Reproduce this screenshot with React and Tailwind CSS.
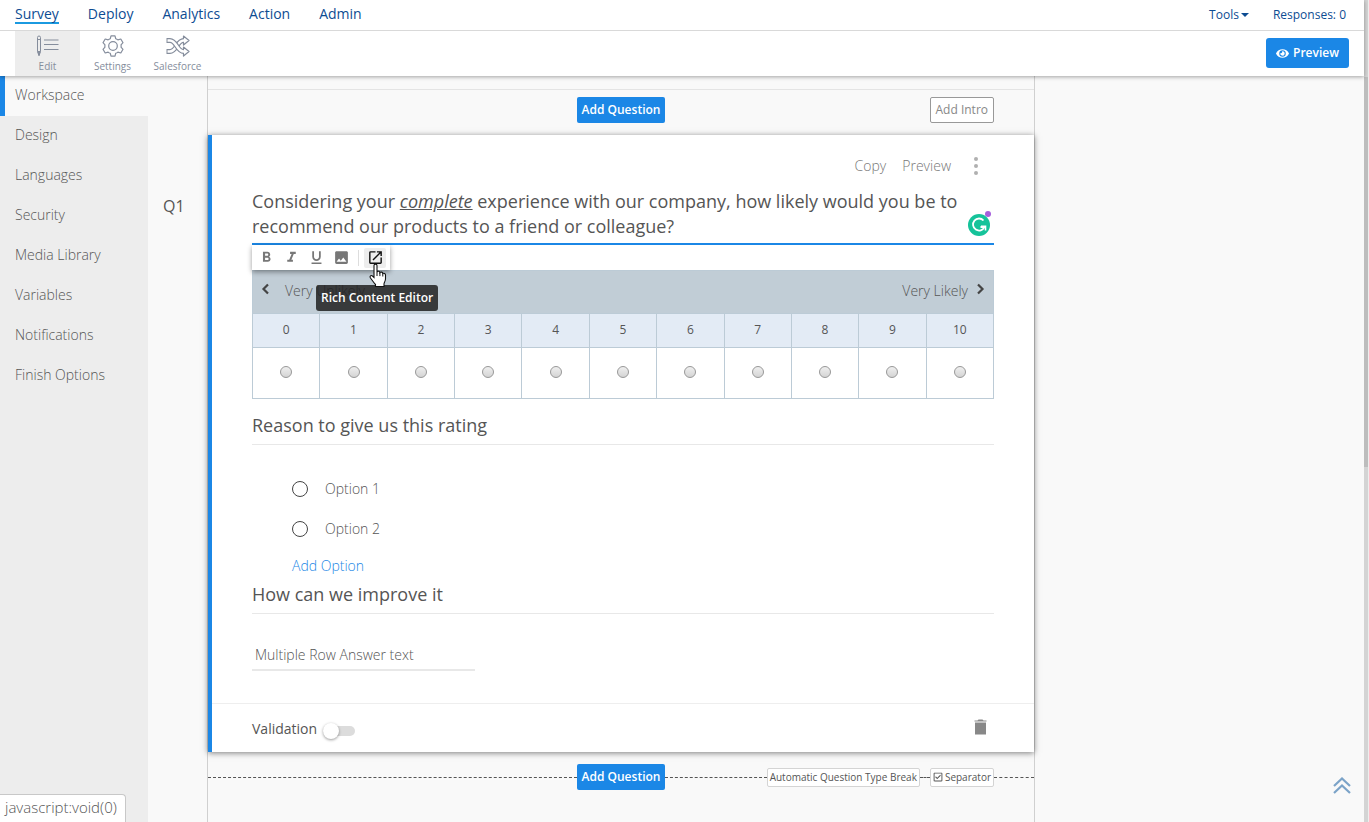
import { useState } from 'react';
import { FaEye, FaRegCheckSquare } from 'react-icons/fa';
import {
  MdFormatBold,
  MdFormatItalic,
  MdFormatUnderlined,
  MdImage,
  MdOpenInNew,
} from 'react-icons/md';

const navItems = ['Survey', 'Deploy', 'Analytics', 'Action', 'Admin'];

const sidebarItems = [
  'Workspace',
  'Design',
  'Languages',
  'Security',
  'Media Library',
  'Variables',
  'Notifications',
  'Finish Options',
];

const ratings = [0, 1, 2, 3, 4, 5, 6, 7, 8, 9, 10];

const EditIcon = () => (
  <svg width="24" height="22" viewBox="0 0 24 22" fill="none" stroke="#858d9c" strokeWidth="1">
    <path d="M1.5 2.5 a1 1 0 0 1 3 0 V16.5 L3 20.5 L1.5 16.5 Z M1.5 4.5 h3 M1.5 16.5 h3" />
    <path d="M2 17 L3 20.5 L4 17 Z" fill="#858d9c" />
    <path d="M8 5 h14.5 M8 9.5 h14.5 M8 14.5 h14.5" strokeWidth="1.2" />
  </svg>
);

const GearIcon = () => (
  <svg width="22" height="22" viewBox="0 0 22 22" fill="none" stroke="#858d9c" strokeWidth="1.2" strokeLinejoin="round">
    <path d="M9 .8 h4 l.7 2.9 q1.3 .4 2.2 1.2 l2.9 -.9 l2.2 3.7 l-2 2.1 q.4 1.2 0 2.4 l2 2.1 l-2.2 3.7 l-2.9 -.9 q-.9 .8 -2.2 1.2 l-.7 2.9 h-4 l-.7 -2.9 q-1.3 -.4 -2.2 -1.2 l-2.9 .9 l-2.2 -3.7 l2 -2.1 q-.4 -1.2 0 -2.4 l-2 -2.1 l2.2 -3.7 l2.9 .9 q.9 -.8 2.2 -1.2 Z" />
    <circle cx="11" cy="11" r="4.3" />
  </svg>
);

const ShuffleIcon = () => (
  <svg width="24" height="22" viewBox="0 0 24 22" fill="none">
    <path d="M0.5 16.5 H4 C10.5 16.5 11 5.5 17.5 5.5 H18" stroke="#858d9c" strokeWidth="5" />
    <path d="M1.5 16.5 H4 C10.5 16.5 11 5.5 17.5 5.5 H19" stroke="#fff" strokeWidth="2.6" />
    <path d="M0.5 5.5 H4 C10.5 5.5 11 16.5 17.5 16.5 H18" stroke="#858d9c" strokeWidth="5" />
    <path d="M1.5 5.5 H4 C10.5 5.5 11 16.5 17.5 16.5 H19" stroke="#fff" strokeWidth="2.6" />
    <path d="M17.5 3.5 V1 L23 5.5 L17.5 10 V7.5 M17.5 14.5 V12 L23 16.5 L17.5 21 V18.5" stroke="#858d9c" strokeWidth="1.2" strokeLinejoin="round" />
  </svg>
);

const GrammarIcon = () => (
  <svg width="27" height="28" viewBox="0 0 27 28" fill="none" aria-hidden="true">
    <circle cx="12" cy="16" r="11" fill="#15c39a" />
    <path d="M16.5 11.5 A6 6 0 1 0 17.5 18 H13.5" stroke="#fff" strokeWidth="1.8" />
    <path d="M14 17.3 H18.5 V21.5" stroke="#fff" strokeWidth="1.6" />
    <circle cx="21" cy="5" r="3" fill="#a65fdc" />
  </svg>
);

const HandCursor = () => (
  <svg width="18" height="25" viewBox="0 0 18 25" aria-hidden="true">
    <path
      d="M5 2.5 C5 .6 8 .6 8 2.5 V9 C8.5 7.8 10.7 8 10.9 9.6 C11.5 8.7 13.5 8.9 13.8 10.5 C14.8 9.8 16.5 10.4 16.5 12 V16 C16.5 18 15 19.5 15 21 V23.5 H6.5 V21.5 C4.5 19.5 3.5 17.5 1.5 15 C.3 13.3 2 11.7 3.5 13 L5 14.5 Z"
      fill="#fff"
      stroke="#111"
      strokeWidth="1.1"
    />
    <path d="M8 9 v4 M10.9 9.6 v3.5 M13.8 10.5 v3" stroke="#111" />
  </svg>
);

const tabs = [
  { label: 'Edit', Icon: EditIcon, active: true },
  { label: 'Settings', Icon: GearIcon },
  { label: 'Salesforce', Icon: ShuffleIcon },
];

function Header() {
  return (
    <header className="relative z-10 bg-white shadow-[0_1px_4px_rgba(0,0,0,0.35)]">
      <div className="flex h-[31px] items-center justify-between border-b border-[#d9d9d9] pl-[15px] pr-[18px] text-[#0d4c92]">
        <nav className="flex gap-[29px] text-sm leading-4">
          {navItems.map((item) => (
            <a
              key={item}
              href="#"
              className={item === 'Survey' ? 'border-b-2 border-[#1b9ae0]' : 'border-b-2 border-transparent'}
            >
              {item}
            </a>
          ))}
        </nav>
        <div className="flex gap-6 text-xs">
          <button type="button" className="flex items-center gap-[2px]">
            Tools
            <svg width="8" height="4" viewBox="0 0 8 4" fill="currentColor"><path d="M0 0 H8 L4 4 Z" /></svg>
          </button>
          <span>Responses: 0</span>
        </div>
      </div>
      <div className="flex items-center justify-between px-[15px]">
        <div className="flex">
          {tabs.map(({ label, Icon, active }) => (
            <button
              key={label}
              type="button"
              className={`flex h-[45px] w-[65px] flex-col items-center gap-px pt-1 text-[10px] leading-4 text-[#858d9c] ${active ? 'bg-[#ededed]' : ''}`}
            >
              <Icon />
              {label}
            </button>
          ))}
        </div>
        <button type="button" className="mb-px flex h-[30px] items-center gap-1 rounded-[3px] bg-[#1b87e6] px-[10px] text-xs font-semibold text-white">
          <FaEye size={13} /> Preview
        </button>
      </div>
    </header>
  );
}

function Sidebar() {
  return (
    <nav className="w-[148px] shrink-0 bg-[#ededed] text-sm font-light">
      {sidebarItems.map((item) => (
        <a
          key={item}
          href="#"
          className={`flex h-10 items-center border-l-[5px] pb-[2px] pl-[10px] ${item === 'Workspace' ? 'border-[#1b87e6] bg-[#f9f9f9]' : 'border-transparent'}`}
        >
          {item}
        </a>
      ))}
    </nav>
  );
}

function AddQuestion() {
  return (
    <button type="button" className="h-[26px] rounded-[2px] bg-[#1b87e6] px-[5px] text-xs font-semibold text-white">
      Add Question
    </button>
  );
}

const toolButton = 'flex h-5 w-[25px] items-center justify-center';

function Toolbar() {
  return (
    <div className="relative flex h-[25px] w-[138px] items-center bg-white pl-[2px] text-[#777] shadow-[0_2px_5px_rgba(0,0,0,0.4)]">
      <button type="button" aria-label="Bold" className={toolButton}><MdFormatBold size={17} /></button>
      <button type="button" aria-label="Italic" className={toolButton}><MdFormatItalic size={17} /></button>
      <button type="button" aria-label="Underline" className={toolButton}><MdFormatUnderlined size={17} /></button>
      <button type="button" aria-label="Image" className={toolButton}><MdImage size={17} /></button>
      <span className="ml-1 mr-[5px] h-4 w-px bg-[#ddd]" />
      <button type="button" aria-label="Rich Content Editor" className="flex h-5 w-[22px] items-center justify-center rounded-[2px] bg-[#ededed] text-[#111]">
        <MdOpenInNew size={17} />
      </button>
      <div role="tooltip" className="absolute left-16 top-10 z-10 whitespace-nowrap rounded-[3px] bg-[#202020]/85 px-[5px] text-xs font-semibold leading-[26px] text-white">
        Rich Content Editor
      </div>
      <div className="absolute left-[117px] top-[18px] z-20">
        <HandCursor />
      </div>
    </div>
  );
}

function RatingTable() {
  return (
    <table className="w-full table-fixed border-collapse border border-[#bccbd6] bg-white">
      <thead>
        <tr className="h-[43px] bg-[#c1cdd6]">
          <th colSpan={11} className="px-2 pb-[3px] text-sm font-light text-[#555]">
            <div className="flex items-center">
              <svg width="9" height="12" viewBox="0 0 9 12" fill="none" stroke="#444" strokeWidth="2.2" className="mb-1"><path d="M7 1.5 L2.5 6 L7 10.5" /></svg>
              <span className="ml-[15px]">Very Unlikely</span>
              <span className="ml-auto mr-2">Very Likely</span>
              <svg width="9" height="12" viewBox="0 0 9 12" fill="none" stroke="#444" strokeWidth="2.2" className="mb-1"><path d="M2 1.5 L6.5 6 L2 10.5" /></svg>
            </div>
          </th>
        </tr>
        <tr className="h-[34px] bg-[#e3ebf5]">
          {ratings.map((n) => (
            <th key={n} className="border border-[#bccbd6] pb-[2px] text-xs font-normal">{n}</th>
          ))}
        </tr>
      </thead>
      <tbody>
        <tr className="h-[51px]">
          {ratings.map((n) => (
            <td key={n} className="border border-[#bccbd6] pb-[2px]">
              <input
                type="radio"
                name="rating"
                value={n}
                aria-label={`Rating ${n}`}
                className="mx-auto block size-3 appearance-none rounded-full border border-[#999] bg-linear-to-b from-[#efefef] to-[#d4d4d4]"
              />
            </td>
          ))}
        </tr>
      </tbody>
    </table>
  );
}

function QuestionCard() {
  const [reason, setReason] = useState('');
  const [validation, setValidation] = useState(false);

  return (
    <section className="border-l-4 border-[#1b87e6] bg-white shadow-[0_1px_6px_rgba(0,0,0,0.5)]">
      <div className="px-10">
        <div className="flex h-[54px] items-center justify-end pr-[15px] pt-2 text-sm font-light text-[#777]">
          <button type="button">Copy</button>
          <button type="button" className="ml-4">Preview</button>
          <button type="button" aria-label="More" className="ml-[22px]">
            <svg width="6" height="18" viewBox="0 0 6 18" fill="#b0b0b0">
              <circle cx="3" cy="2" r="2" />
              <circle cx="3" cy="9" r="2" />
              <circle cx="3" cy="16" r="2" />
            </svg>
          </button>
        </div>

        <div className="flex items-end justify-between border-b-2 border-[#1b87e6]">
          <h2 className="pb-1 text-lg/[25px]">
            Considering your <em className="underline">complete</em> experience with our company, how likely would you be to
            recommend our products to a friend or colleague?
          </h2>
          <div className="-ml-4 mb-[6px] shrink-0">
            <GrammarIcon />
          </div>
        </div>
        <Toolbar />
        <RatingTable />

        <h3 className="mt-[14px] border-b border-[#e8e8e8] pb-[7px] text-lg/6">Reason to give us this rating</h3>
        <div className="pl-10 pt-6 text-sm font-light">
          {['Option 1', 'Option 2'].map((option) => (
            <label key={option} className="flex h-10 items-center gap-[17px]">
              <input
                type="radio"
                name="reason"
                checked={reason === option}
                onChange={() => setReason(option)}
                className="size-4 appearance-none rounded-full border border-[#444] checked:border-4"
              />
              {option}
            </label>
          ))}
          <button type="button" className="block h-[33px] text-[#1b87e6]">Add Option</button>
        </div>

        <h3 className="border-b border-[#e8e8e8] pb-[7px] text-lg/6">How can we improve it</h3>
        <input
          type="text"
          aria-label="Answer"
          placeholder="Multiple Row Answer text"
          className="mb-8 mt-[26px] block h-[31px] w-[223px] border-b-2 border-[#e8e8e8] px-[3px] text-sm font-light outline-none placeholder:text-[#555]"
        />
      </div>

      <div className="flex h-[49px] items-center justify-between border-t border-[#eee] px-10">
        <label className="flex items-center gap-[6px] pt-[2px] text-sm">
          Validation
          <input
            type="checkbox"
            checked={validation}
            onChange={(e) => setValidation(e.target.checked)}
            className="relative mt-1 h-[10px] w-8 appearance-none rounded-full bg-[#dcdcdc] before:absolute before:-top-[3px] before:left-0 before:size-4 before:rounded-full before:bg-white before:shadow-[0_1px_3px_rgba(0,0,0,0.4)] checked:bg-[#9cc9f3] checked:before:left-4"
          />
        </label>
        <button type="button" aria-label="Delete" className="mb-[3px] mr-[7px]">
          <svg width="13" height="16" viewBox="0 0 13 16" fill="#888">
            <path d="M.5 1.5 H3.5 L4.5 .5 H8.5 L9.5 1.5 H12.5 V2.5 H.5 Z M1 3.5 H12 V15.5 H1 Z" />
          </svg>
        </button>
      </div>
    </section>
  );
}

const chip = 'flex h-[19px] items-center gap-[2px] rounded-[2px] border border-[#d4d4d4] bg-white px-[2px] text-[10px]';
const dashes = 'border-t border-dashed border-[#555]';

function Separator() {
  return (
    <div className="grid grid-cols-[1fr_auto_1fr] items-center pt-3">
      <div className={dashes} />
      <AddQuestion />
      <div className="flex items-center">
        <div className={`flex-1 ${dashes}`} />
        <button type="button" className={chip}>Automatic Question Type Break</button>
        <div className={`w-[10px] ${dashes}`} />
        <button type="button" className={chip}>
          <FaRegCheckSquare size={10} /> Separator
        </button>
        <div className={`w-10 ${dashes}`} />
      </div>
    </div>
  );
}

export default function App() {
  return (
    <div className="flex min-h-screen bg-[#f9f9f9] font-['Open_Sans',sans-serif] text-[#555]">
      <div className="flex min-w-0 flex-1 flex-col">
        <Header />
        <div className="flex flex-1">
          <Sidebar />
          <div className="w-[59px] shrink-0 pl-[15px] pt-[118px] text-base/6">Q1</div>
          <main className="max-w-[828px] flex-1 border-x border-[#d0d0d0]">
            <div className="h-[14px] border-b border-[#e4e4e4]" />
            <div className="grid h-[45px] grid-cols-[1fr_auto_1fr] items-center pb-[6px]">
              <span />
              <AddQuestion />
              <button type="button" className="mr-10 h-[26px] justify-self-end rounded-[2px] border border-[#999] bg-white px-[5px] text-xs text-[#888]">
                Add Intro
              </button>
            </div>
            <QuestionCard />
            <Separator />
          </main>
        </div>
      </div>

      <div className="w-[5px] border-r border-[#eee] bg-[#d4d4d4] pt-[77px]">
        <div className="h-[390px] bg-[#bdbdbd]" />
      </div>

      <button type="button" aria-label="Back to top" className="fixed bottom-7 right-[18px]">
        <svg width="18" height="17" viewBox="0 0 18 17" fill="none" stroke="#7ba3c8" strokeWidth="2.2">
          <path d="M1 9 L9 1.5 L17 9 M1 16 L9 8.5 L17 16" />
        </svg>
      </button>
      <div className="fixed bottom-0 left-0 z-20 h-7 rounded-tr border-r border-t border-[#c8c8c8] bg-white pl-[5px] pr-2 text-[15px]/[25px] font-light">
        javascript:void(0)
      </div>
    </div>
  );
}
